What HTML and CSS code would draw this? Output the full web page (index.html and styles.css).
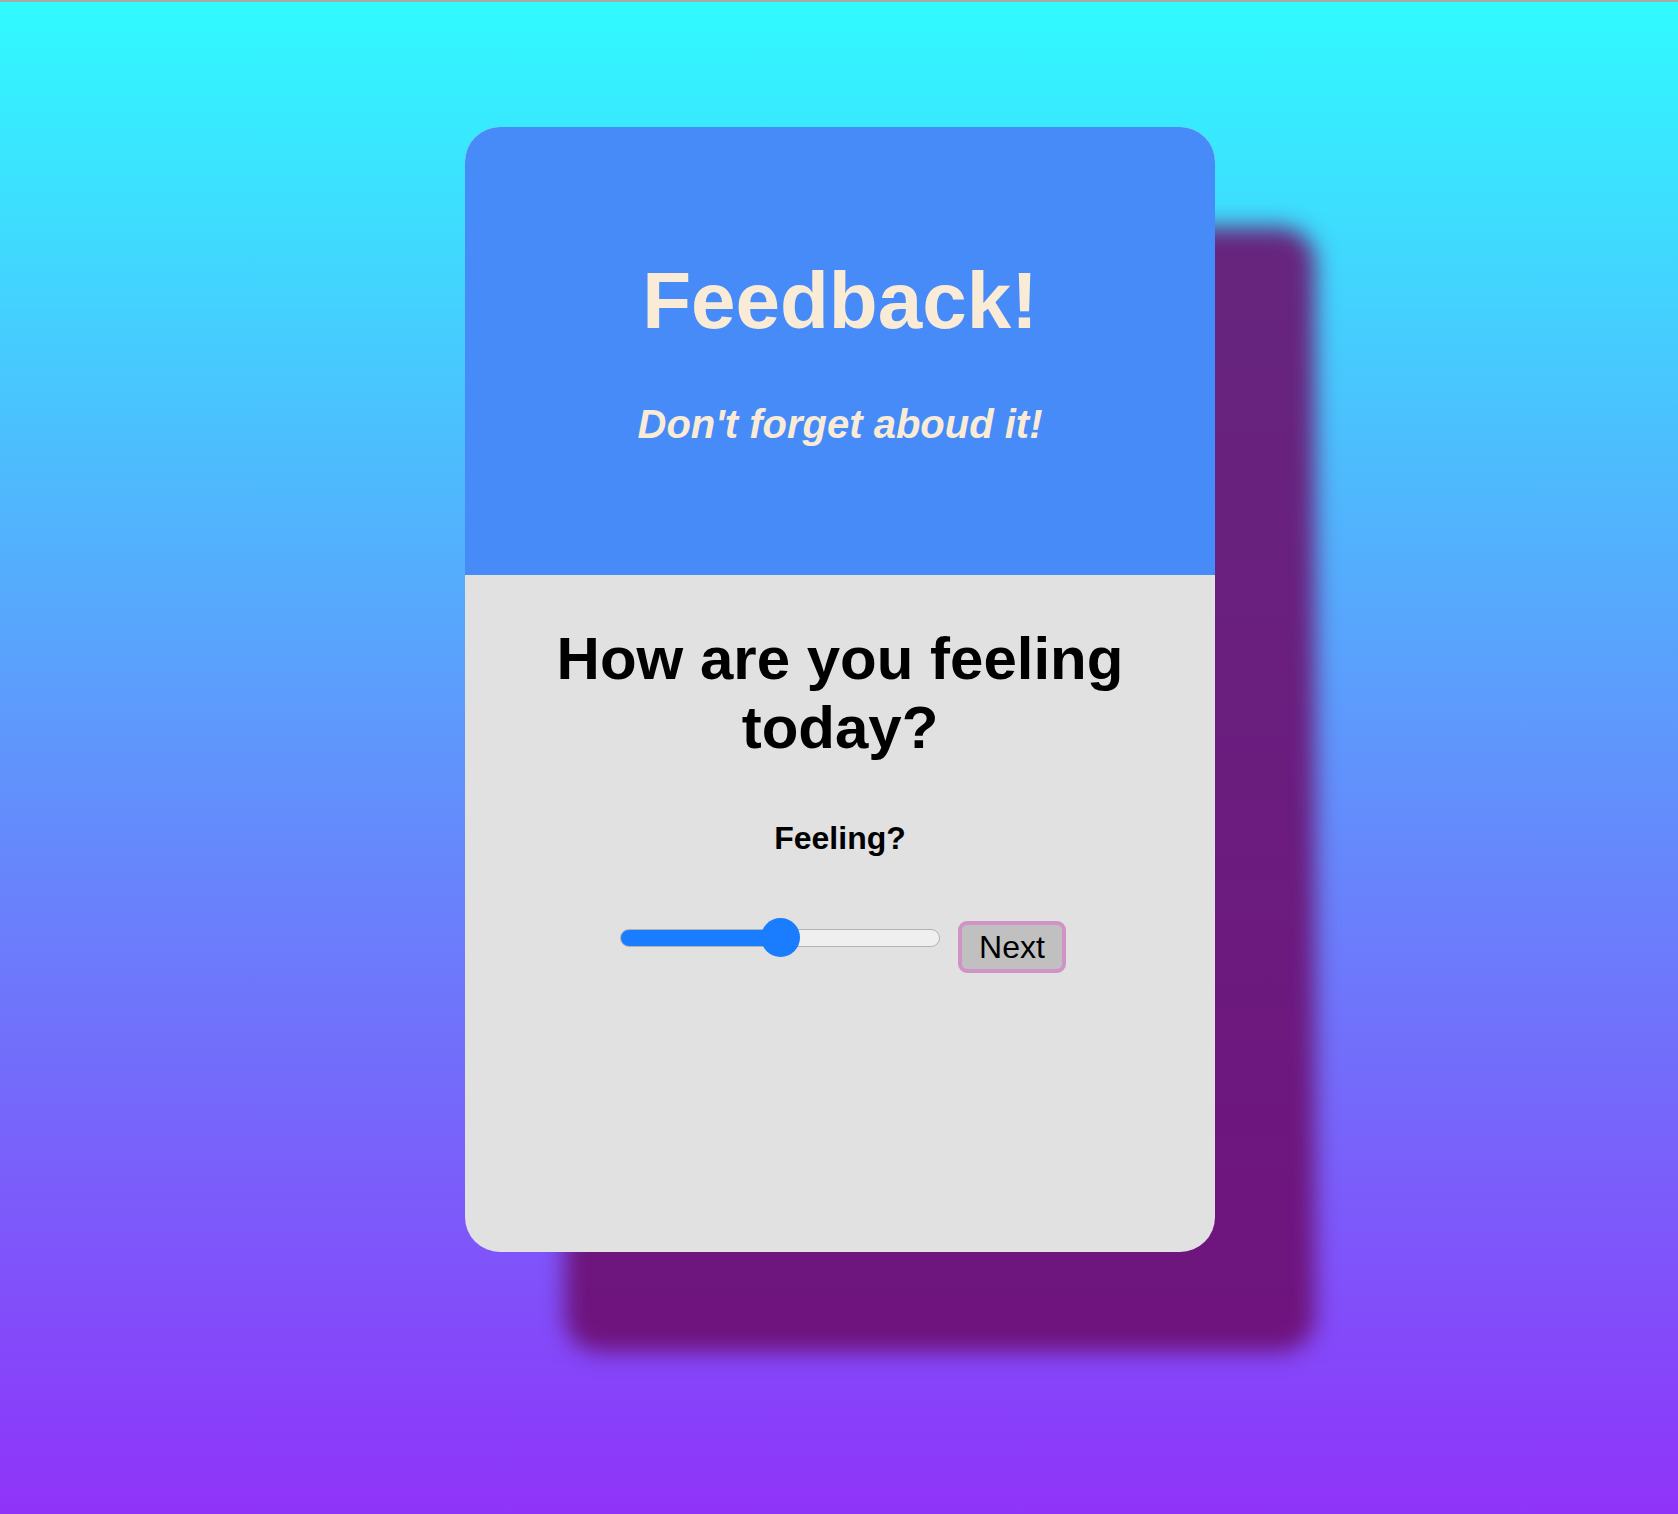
FILE: index.html
```html
<!DOCTYPE html>
<html lang="en">
<head>
<meta charset="utf-8">
<title>Feedback</title>
<link rel="stylesheet" href="styles.css">
</head>
<body>
<div class="page">
  <main class="card">
    <header class="card-head">
      <h1 class="title">Feedback!</h1>
      <p class="subtitle">Don't forget aboud it!</p>
    </header>
    <section class="card-body">
      <h2 class="question">How are you feeling today?</h2>
      <label class="label" for="feel">Feeling?</label>
      <div class="controls">
        <input id="feel" class="slider" type="range" min="0" max="100" value="50">
        <button class="next" type="button">Next</button>
      </div>
    </section>
  </main>
</div>
</body>
</html>
```

FILE: styles.css
```css
html, body {
  margin: 0;
  padding: 0;
}

body {
  font-family: "Liberation Sans", Arial, Helvetica, sans-serif;
  border-top: 2px solid #a9a9a9;
}

.page {
  min-height: 1512px;
  background: linear-gradient(to bottom, #30faff 0%, #6094fc 50%, #8f33f9 100%);
  display: flex;
  justify-content: center;
  align-items: flex-start;
  padding-top: 125px;
  padding-left: 2px;
  box-sizing: border-box;
}

.card {
  width: 750px;
  height: 1125px;
  border-radius: 35px;
  overflow: hidden;
  background: #e1e1e1;
  box-shadow: 100px 100px 22px 0 rgba(108, 12, 108, 0.88);
  display: flex;
  flex-direction: column;
}

.card-head {
  height: 448px;
  background: #468bf8;
  display: flex;
  flex-direction: column;
  align-items: center;
  justify-content: center;
  gap: 54px;
  color: #faebd7;
  box-sizing: border-box;
  padding-bottom: 0;
}

.title {
  margin: 0;
  font-size: 80px;
  font-weight: 700;
  line-height: 92px;
}

.subtitle {
  margin: 0;
  font-size: 40px;
  font-weight: 700;
  font-style: italic;
  line-height: 46px;
}

.card-body {
  flex: 1;
  display: flex;
  flex-direction: column;
  align-items: center;
  padding-top: 49px;
}

.question {
  margin: 0;
  width: 640px;
  text-align: center;
  font-size: 60px;
  font-weight: 700;
  line-height: 69px;
  color: #000;
}

.label {
  margin-top: 58px;
  font-size: 32px;
  font-weight: 700;
  line-height: 37px;
  color: #000;
}

.controls {
  margin-top: 61px;
  display: flex;
  align-items: flex-start;
  gap: 18px;
  padding-left: 6px;
}

.slider {
  -webkit-appearance: none;
  appearance: none;
  margin: 0;
  width: 320px;
  height: 39px;
  background: transparent;
  cursor: pointer;
}

.slider::-webkit-slider-runnable-track {
  height: 18px;
  border-radius: 9px;
  box-sizing: border-box;
  border: 1px solid #b2b2b2;
  background: linear-gradient(to right, #1a7cff 0%, #1a7cff 50%, #efefef 50%, #efefef 100%);
}

.slider::-webkit-slider-thumb {
  -webkit-appearance: none;
  appearance: none;
  width: 39px;
  height: 39px;
  border-radius: 50%;
  background: #1a7cff;
  border: none;
  margin-top: -11.5px;
}

.next {
  margin-top: 3px;
  font-family: "Liberation Sans", Arial, Helvetica, sans-serif;
  font-size: 32px;
  line-height: 38px;
  padding: 3px 17px;
  color: #000;
  background: #c0c0c0;
  border: 4px solid #cf93c6;
  border-radius: 9px;
}
```
